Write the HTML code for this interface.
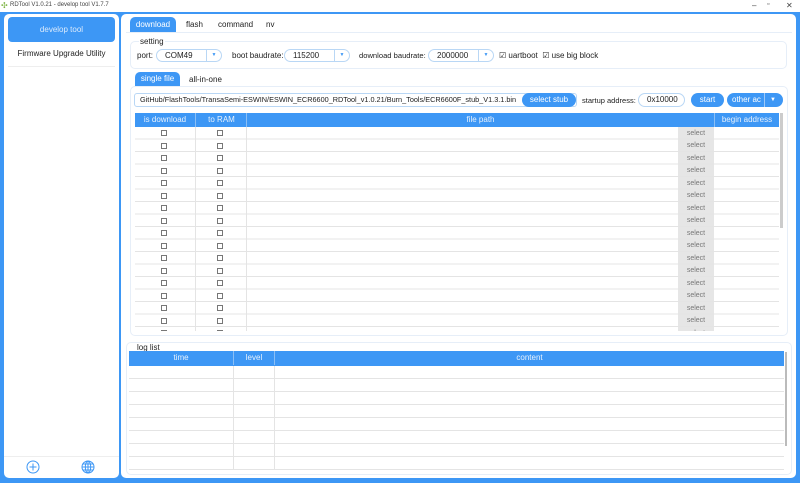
<!DOCTYPE html><html><head><style>
*{box-sizing:border-box;margin:0;padding:0}
body{width:800px;height:483px;overflow:hidden;background:#3d97f5;font-family:"Liberation Sans",sans-serif;font-size:8px;color:#222;position:relative}
.a{position:absolute}
.tb{left:0;top:0;width:800px;height:12px;background:#fff;font-size:6px;color:#444}
.w{background:#fff;border-radius:5px}
.btn{background:#3d97f5;color:#fff;border-radius:7px;text-align:center}
.sel{border:1px solid #b9d7f5;border-radius:7px;background:#fff;padding-left:8px;line-height:11px}
.sel i{position:absolute;right:0;top:0;width:15px;height:11px;border-left:1px solid #b9d7f5;color:#3d97f5;font-size:5px;font-style:normal;text-align:center}
.cb{width:6px;height:6px;border:1px solid #777}
.hd{background:#3d97f5;color:#e8f2fd;text-align:center;line-height:14px}
</style></head><body>
<div class="a tb"><span class="a" style="left:1px;top:1px;color:#7cb342;font-size:8px">✣</span><span class="a" style="left:10px;top:2px">RDTool V1.0.21 - develop tool V1.7.7</span>
<span class="a" style="left:752px;top:1px;font-size:8px">–</span><span class="a" style="left:767px;top:1px;font-size:7px">▫</span><span class="a" style="left:786px;top:1px;font-size:8px">✕</span></div>
<div class="a w" style="left:4px;top:14px;width:115px;height:464px"></div>
<div class="a btn" style="left:8px;top:17px;width:107px;height:25px;line-height:25px;border-radius:4px;color:#dcebfc">develop tool</div>
<div class="a" style="left:8px;top:49px;width:107px;text-align:center">Firmware Upgrade Utility</div>
<div class="a" style="left:8px;top:66px;width:107px;border-top:1px solid #eee"></div>
<div class="a" style="left:4px;top:456px;width:115px;border-top:1px solid #eee"></div>
<svg class="a" style="left:26px;top:460px" width="14" height="14"><circle cx="7" cy="7" r="6" fill="none" stroke="#3d97f5"/><path d="M7 3.5v7M3.5 7h7" stroke="#3d97f5"/></svg>
<svg class="a" style="left:81px;top:460px" width="14" height="14" fill="none" stroke="#3d97f5"><circle cx="7" cy="7" r="6"/><ellipse cx="7" cy="7" rx="2.7" ry="6"/><path d="M1 7h12M7 1v12M2 4h10M2 10h10"/></svg>
<div class="a w" style="left:121px;top:14px;width:675px;height:464px"></div>
<div class="a btn" style="left:130px;top:17px;width:46px;height:15px;line-height:15px;border-radius:5px 5px 0 0">download</div>
<div class="a" style="left:186px;top:20px">flash</div><div class="a" style="left:218px;top:20px">command</div><div class="a" style="left:266px;top:20px">nv</div>
<div class="a" style="left:126px;top:32px;width:666px;border-top:1px solid #e6eef8"></div>
<div class="a" style="left:130px;top:41px;width:657px;height:28px;border:1px solid #e6eef8;border-radius:5px"></div>
<div class="a" style="left:139px;top:37px;background:#fff;padding:0 1px">setting</div>
<div class="a" style="left:137px;top:51px">port:</div>
<div class="a sel" style="left:156px;top:49px;width:66px;height:13px">COM49<i>▼</i></div>
<div class="a" style="left:232px;top:51px">boot baudrate:</div>
<div class="a sel" style="left:284px;top:49px;width:66px;height:13px">115200<i>▼</i></div>
<div class="a" style="left:359px;top:51px;font-size:7.6px">download baudrate:</div>
<div class="a sel" style="left:428px;top:49px;width:66px;height:13px">2000000<i>▼</i></div>
<div class="a" style="left:499px;top:51px">☑ uartboot &nbsp;☑ use big block</div>
<div class="a btn" style="left:135px;top:72px;width:45px;height:14px;line-height:14px;border-radius:5px 5px 0 0">single file</div>
<div class="a" style="left:189px;top:75px">all-in-one</div>
<div class="a" style="left:130px;top:86px;width:658px;height:250px;border:1px solid #e6eef8;border-radius:5px"></div>
<div class="a" style="left:134px;top:93px;width:443px;height:14px;border:1px solid #b9d7f5;border-radius:3px;padding-left:5px;line-height:12px;overflow:hidden;white-space:nowrap;font-size:7.3px">GitHub/FlashTools/TransaSemi-ESWIN/ESWIN_ECR6600_RDTool_v1.0.21/Burn_Tools/ECR6600F_stub_V1.3.1.bin</div>
<div class="a btn" style="left:522px;top:93px;width:54px;height:14px;line-height:14px">select stub</div>
<div class="a" style="left:582px;top:96px;font-size:7.5px">startup address:</div>
<div class="a sel" style="left:638px;top:93px;width:47px;height:14px">0x10000</div>
<div class="a btn" style="left:691px;top:93px;width:33px;height:14px;line-height:14px">start</div>
<div class="a btn" style="left:727px;top:93px;width:56px;height:14px;line-height:14px;text-align:left;padding-left:5px">other ac<span class="a" style="left:37px;top:0;border-left:1px solid #9cc8f8;height:14px;padding-left:5px;font-size:6px">▼</span></div>
<div class="a hd" style="left:135px;top:113px;width:644px;height:14px"></div>
<div class="a hd" style="left:135px;top:113px;width:60px">is download</div>
<div class="a hd" style="left:195px;top:113px;width:52px;border-left:1px solid #8bbff5">to RAM</div>
<div class="a hd" style="left:246px;top:113px;width:468px;border-left:1px solid #8bbff5">file path</div>
<div class="a hd" style="left:714px;top:113px;width:65px;border-left:1px solid #8bbff5">begin address</div>
<div class="a" style="left:135px;top:127px;width:644px;height:204px;overflow:hidden">
<div class="a" style="left:60px;top:0;height:204px;border-left:1px solid #e4e4e4"></div>
<div class="a" style="left:111px;top:0;height:204px;border-left:1px solid #e4e4e4"></div>
<div class="a" style="left:543px;top:0;width:36px;height:204px;background:#e6e6e6"></div>
<div class="a" style="left:0;top:0;width:644px;height:204px;background:repeating-linear-gradient(#0000 0 11.5px,#e4e4e4 11.5px 12.5px)"></div>
</div>
<div class="a" style="left:780px;top:113px;width:3px;height:115px;background:#ccc"></div>
<div class="a" style="left:0;top:0;width:800px;height:331px;overflow:hidden">
<script>
var h='';for(var i=0;i<17;i++){var y=130+i*12.5;h+='<div class="a cb" style="left:161px;top:'+y+'px"></div><div class="a cb" style="left:217px;top:'+y+'px"></div><div class="a" style="left:678px;top:'+(y-0.5)+'px;width:36px;text-align:center;color:#777;font-size:7px">select</div>';}
document.write(h);
</script></div>
<div class="a" style="left:126px;top:342px;width:666px;height:133px;border:1px solid #e6eef8;border-radius:5px"></div>
<div class="a" style="left:136px;top:343px;background:#fff;padding:0 1px">log list</div>
<div class="a hd" style="left:129px;top:351px;width:655px;height:15px"></div>
<div class="a hd" style="left:129px;top:351px;width:104px">time</div>
<div class="a hd" style="left:233px;top:351px;width:41px;border-left:1px solid #8bbff5">level</div>
<div class="a hd" style="left:274px;top:351px;width:510px;border-left:1px solid #8bbff5">content</div>
<div class="a" style="left:129px;top:366px;width:655px;height:104px;background:repeating-linear-gradient(#0000 0 12px,#e4e4e4 12px 13px)"></div>
<div class="a" style="left:233px;top:366px;height:104px;border-left:1px solid #e4e4e4"></div>
<div class="a" style="left:274px;top:366px;height:104px;border-left:1px solid #e4e4e4"></div>
<div class="a" style="left:785px;top:352px;width:2px;height:94px;background:#bbb"></div>
</body></html>
